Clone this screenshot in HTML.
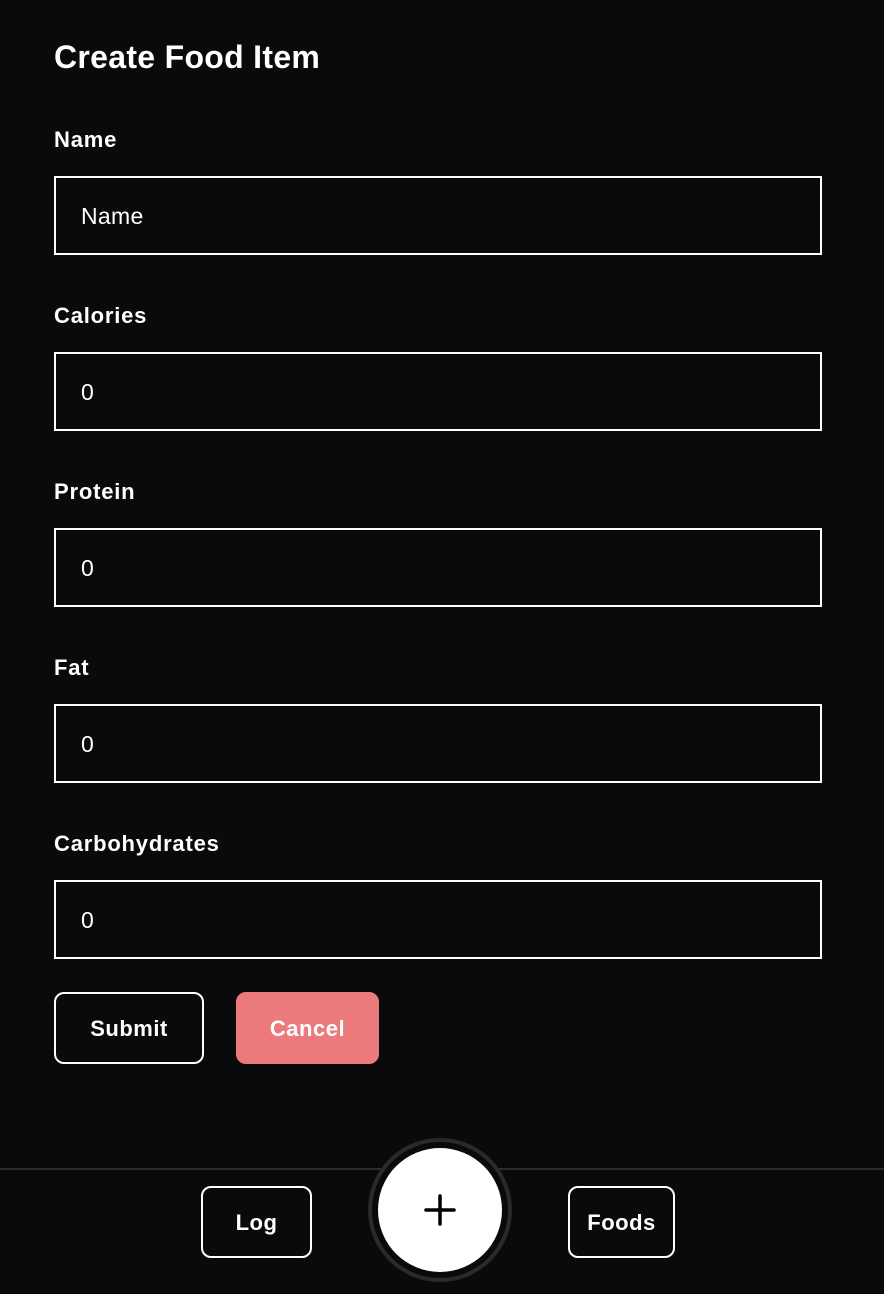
<!DOCTYPE html>
<html><head><meta charset="utf-8"><style>
*{margin:0;padding:0;box-sizing:border-box}
body{width:884px;height:1294px;background:#0a0a0c;color:#fff;font-family:"Liberation Sans",sans-serif;position:relative;overflow:hidden}
.a{position:absolute}
h1{position:absolute;left:54px;top:37px;font-size:32px;font-weight:700;line-height:40px;letter-spacing:0.3px}
.lbl{position:absolute;left:54px;font-size:22px;font-weight:700;line-height:28px;letter-spacing:0.8px}
.inp{position:absolute;left:54px;width:768px;height:79px;border:2px solid #fff;font-size:23px;line-height:77px;padding-left:25px;letter-spacing:0.3px}
.btn{position:absolute;border:2px solid #fff;border-radius:10px;font-size:22px;font-weight:700;display:flex;align-items:center;justify-content:center;letter-spacing:0.5px}
</style></head><body>
<h1>Create Food Item</h1>
<div class="lbl" style="top:126px">Name</div>
<div class="inp" style="top:176px">Name</div>
<div class="lbl" style="top:302px">Calories</div>
<div class="inp" style="top:352px">0</div>
<div class="lbl" style="top:478px">Protein</div>
<div class="inp" style="top:528px">0</div>
<div class="lbl" style="top:654px">Fat</div>
<div class="inp" style="top:704px">0</div>
<div class="lbl" style="top:830px">Carbohydrates</div>
<div class="inp" style="top:880px">0</div>
<div class="btn" style="left:54px;top:992px;width:150px;height:72px;padding-top:2px">Submit</div>
<div class="btn" style="left:236px;top:992px;width:143px;height:72px;background:#ec7a7c;border-color:#ec7a7c;padding-top:2px">Cancel</div>
<div class="a" style="left:0;top:1168px;width:884px;height:2px;background:#2c2c2e"></div>
<div class="btn" style="left:201px;top:1186px;width:111px;height:72px;padding-top:2px">Log</div>
<div class="btn" style="left:568px;top:1186px;width:107px;height:72px;padding-top:2px">Foods</div>
<div class="a" style="left:368px;top:1138px;width:144px;height:144px;border-radius:50%;background:#0a0a0c;border:4px solid #2a2a2c"></div>
<div class="a" style="left:378px;top:1148px;width:124px;height:124px;border-radius:50%;background:#fff"></div>
<svg class="a" style="left:420px;top:1190px" width="40" height="40" viewBox="0 0 40 40"><path d="M20 6v28M6 20h28" stroke="#000" stroke-width="3.5" stroke-linecap="round"/></svg>
</body></html>
